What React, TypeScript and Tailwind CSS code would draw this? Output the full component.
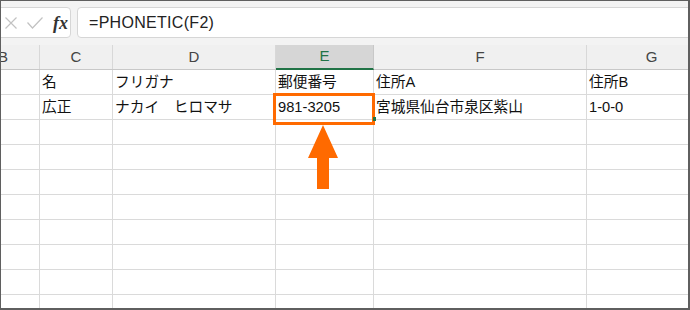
import React from "react";

const FONT = { fontFamily: '"Liberation Sans", "Noto Sans CJK JP", sans-serif' };

const headers = ["B", "C", "D", "E", "F", "G"];
const data: string[][] = [
  ["", "名", "フリガナ", "郵便番号", "住所A", "住所B"],
  ["", "広正", "ナカイ　ヒロマサ", "981-3205", "宮城県仙台市泉区紫山", "1-0-0"],
];
const ROWS = 10;
const gridCols = "grid grid-cols-[73px_73px_163px_98px_213px_130px] -ml-[34px]";

export default function App() {
  return (
    <div
      className="relative w-[690px] h-[310px] overflow-hidden border-[#5f5f5f] border-t border-l border-r-2 border-b-2 bg-white flex flex-col"
      style={FONT}
    >
      {/* Formula bar */}
      <div className="h-[44px] shrink-0 bg-[#f3f3f3] flex items-start pt-[6px] gap-[6px]">
        <div className="-ml-[12px] w-[82px] h-[31px] bg-white border border-[#d6d6d6] rounded-[4px] flex items-center pl-[14px] gap-[6px]">
          <svg width="14" height="14" viewBox="0 0 14 14" className="shrink-0">
            <path d="M1.5 1.5 L12.5 12.5 M12.5 1.5 L1.5 12.5" stroke="#c2c2c2" strokeWidth="1.2" fill="none" />
          </svg>
          <svg width="18" height="14" viewBox="0 0 18 14" className="shrink-0 ml-[2px]">
            <path d="M1.5 6.5 L6.5 12 L16.5 1.5" stroke="#c2c2c2" strokeWidth="1.2" fill="none" />
          </svg>
          <span
            className="ml-[3px] text-[18px] italic font-bold text-[#333] leading-none"
            style={{ fontFamily: '"Liberation Serif", "DejaVu Serif", serif' }}
          >
            fx
          </span>
        </div>
        <div className="flex-1 h-[31px] -mr-[10px] bg-white border border-[#d6d6d6] rounded-[4px] flex items-center pl-[11px]">
          <span className="text-[16px] text-[#222] tracking-[0.3px]">=PHONETIC(F2)</span>
        </div>
      </div>

      {/* Column header */}
      <div className={`${gridCols} h-[25px] shrink-0 bg-[#f0f0f0] border-b border-[#c8c8c8]`}>
        {headers.map((h) => {
          const sel = h === "E";
          return (
            <div
              key={h}
              className={
                sel
                  ? "bg-[#d6d6d6] border-r border-[#c8c8c8] border-b-2 border-b-[#217346] -mb-[1px] flex items-center justify-center text-[15px] text-[#217346]"
                  : "border-r border-[#d8d8d8] flex items-center justify-center text-[15px] text-[#444]"
              }
            >
              {h}
            </div>
          );
        })}
      </div>

      {/* Rows */}
      {Array.from({ length: ROWS }).map((_, r) => (
        <div key={r} className={`${gridCols} h-[25px] shrink-0`}>
          {headers.map((h, c) => (
            <div
              key={h}
              className="border-r border-b border-[#dadada] flex items-center pl-[2px] text-[14.7px] text-[#111] whitespace-nowrap overflow-visible"
            >
              {data[r]?.[c] ?? ""}
            </div>
          ))}
        </div>
      ))}

      {/* Selection highlight */}
      <div className="absolute left-[272px] top-[92px] w-[102px] h-[32px] border-[3px] border-[#ff6a00]" />
      <div className="absolute left-[372px] top-[116px] w-[3px] h-[4px] bg-[#217346]" />

      {/* Arrow */}
      <svg className="absolute left-[306px] top-[124px]" width="32" height="64" viewBox="0 0 32 64">
        <path d="M16 0 L31 33 L22 33 L22 64 L10 64 L10 33 L1 33 Z" fill="#ff6a00" />
      </svg>
    </div>
  );
}
